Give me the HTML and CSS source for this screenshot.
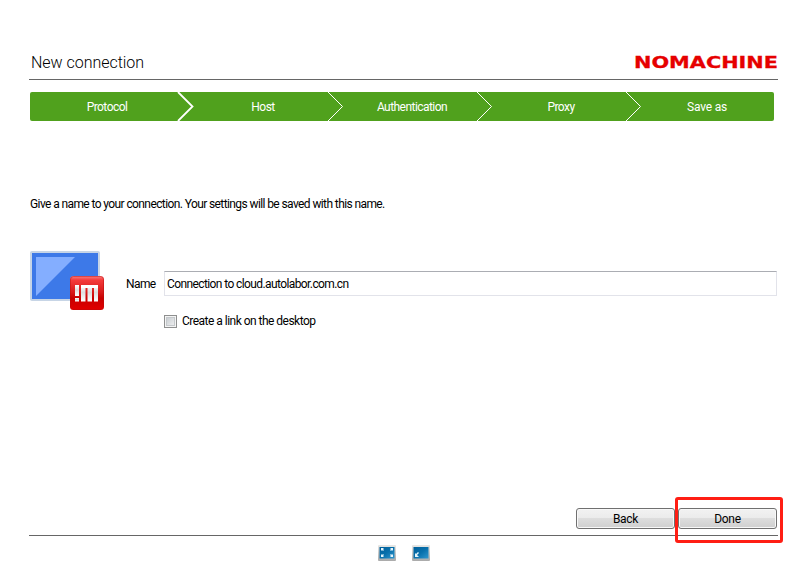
FILE: index.html
```
<!DOCTYPE html>
<html lang="en">
<head>
<meta charset="utf-8">
<title>New connection</title>
<link rel="stylesheet" href="styles.css">
</head>
<body>
<main class="window">
  <header class="header">
    <h1>New connection</h1>
    <svg class="brand" width="144" height="16" viewBox="0 0 144 16" role="img" aria-label="NoMachine"><text x="0" y="12" textLength="144" lengthAdjust="spacingAndGlyphs">NOMACHINE</text></svg>
  </header>
  <ol class="steps">
    <li class="strong"><span>Protocol</span><svg class="chevron" viewBox="0 0 17 29"><path d="M1 0 15.5 14.5 1 29"/></svg></li>
    <li><span>Host</span><svg class="chevron" viewBox="0 0 17 29"><path d="M1 0 15.5 14.5 1 29"/></svg></li>
    <li><span>Authentication</span><svg class="chevron" viewBox="0 0 17 29"><path d="M1 0 15.5 14.5 1 29"/></svg></li>
    <li><span>Proxy</span><svg class="chevron" viewBox="0 0 17 29"><path d="M1 0 15.5 14.5 1 29"/></svg></li>
    <li><span>Save as</span></li>
  </ol>
  <p class="intro">Give a name to your connection. Your settings will be saved with this name.</p>
  <section class="form">
    <svg class="session-icon" width="75" height="60" viewBox="0 0 75 60">
      <defs>
        <linearGradient id="badge" x2="0" y2="1"><stop offset="0" stop-color="#f98080"/><stop offset=".12" stop-color="#f43b3b"/><stop offset=".48" stop-color="#d71919"/><stop offset=".65" stop-color="#c80000"/><stop offset="1" stop-color="#e20000"/></linearGradient>
        <linearGradient id="mark" x2="0" y2="1"><stop offset="0" stop-color="#fff"/><stop offset=".45" stop-color="#ddd"/><stop offset="1" stop-color="#fff"/></linearGradient>
      </defs>
      <rect width="70" height="50" rx="2" fill="#c7d5e6"/>
      <rect x="2" y="2" width="66" height="46" fill="#3d79e8"/>
      <path d="M6 6H45L6 45Z" fill="#84aeff"/>
      <rect x="40" y="25" width="34" height="34" rx="3.5" fill="url(#badge)"/>
      <rect x="40.5" y="25.5" width="33" height="33" rx="3" fill="none" stroke="#b90b0b" stroke-opacity=".45"/>
      <g fill="url(#mark)"><rect x="45" y="34" width="4" height="11"/><rect x="45" y="47" width="4" height="3.5"/><rect x="51" y="34" width="4.5" height="16.5"/><rect x="57.5" y="34" width="4.5" height="16.5"/><rect x="64" y="34" width="4" height="16.5"/></g>
      <rect x="51" y="34" width="17" height="3" fill="#fff"/>
    </svg>
    <div class="fields">
      <label for="name">Name</label>
      <input id="name" type="text" value="Connection to cloud.autolabor.com.cn">
      <label class="check"><input type="checkbox"><span>Create a link on the desktop</span></label>
    </div>
  </section>
  <footer class="footer">
    <div class="actions">
      <button>Back</button>
      <div class="highlighted"><button>Done</button></div>
    </div>
    <div class="tools">
      <svg width="20" height="18" viewBox="0 0 20 18">
        <defs><linearGradient id="screen" x2="1" y2="1"><stop stop-color="#005f9a"/><stop offset=".5" stop-color="#0870ac"/><stop offset="1" stop-color="#3197ce"/></linearGradient><linearGradient id="frame" x2="0" y2="1"><stop stop-color="#e8e8e6"/><stop offset="1" stop-color="#aaa"/></linearGradient></defs>
        <rect x="1" y="1" width="18" height="16" rx="1" fill="url(#frame)"/><rect x="2.5" y="3" width="15" height="11.5" fill="url(#screen)"/>
        <path d="M4 4h3L6 5l1 1-1 1-1-1-1 1zM16 4h-3l1 1-1 1 1 1 1-1 1 1zM4 13h3l-1-1 1-1-1-1-1 1-1-1zM16 13h-3l1-1-1-1 1-1 1 1 1-1z" fill="#e3f4fb"/>
      </svg>
      <svg width="20" height="18" viewBox="0 0 20 18">
        <rect x="1" y="1" width="18" height="16" rx="1" fill="url(#frame)"/><rect x="2.5" y="3" width="15" height="11.5" fill="url(#screen)"/>
        <path d="M4 13V9l1 1 2-2 1 1-2 2 1 1 1 1z" fill="#e3f4fb"/>
      </svg>
    </div>
  </footer>
</main>
</body>
</html>
```
FILE: styles.css
```
* { box-sizing: border-box; }
body { margin: 0; background: #fff; color: #000; font: 12px/16px Roboto, "Liberation Sans", sans-serif; letter-spacing: -.6px; }
.window { height: 570px; padding: 48px 27px 0 29px; display: flex; flex-direction: column; overflow: hidden; }
.header { height: 32px; border-bottom: 1px solid #666; display: flex; align-items: center; justify-content: space-between; }
h1 { margin: 0 0 1px 2px; font-size: 16px; line-height: 20px; font-weight: 300; letter-spacing: -.03px; }
.brand { overflow: visible; }
.brand text { font: bold 16px "DejaVu Sans", sans-serif; fill: #e60000; stroke: #e60000; stroke-width: .3px; letter-spacing: 0; }
.steps { list-style: none; margin: 12px 0 0 1px; padding: 0; width: 744px; height: 29px; flex: none; display: grid; grid-template-columns: 149px 149px 149px 149px 1fr; background: #50a11d; border-radius: 2px; color: #fff; letter-spacing: -.55px; }
.steps li { position: relative; display: flex; align-items: center; justify-content: center; padding-left: 19px; }
.steps li:first-child { padding-left: 5px; }
.steps li:last-child { padding-left: 14px; letter-spacing: -.2px; }
.chevron { position: absolute; right: -15.5px; top: 0; width: 17px; height: 29px; fill: none; stroke: #fff; stroke-width: 1; z-index: 1; }
.strong .chevron { right: -15px; stroke-width: 1.8; }
.intro { margin: 75px 0 0 1px; }
.form { margin-top: 39px; display: flex; align-items: flex-start; padding-left: 1px; }
.session-icon { flex: none; }
.fields { flex: 1; margin: 20px 1px 0 21px; display: grid; grid-template-columns: 38px 1fr; align-items: center; row-gap: 17px; }
.fields input[type=text] { width: 100%; height: 25px; padding: 0 2px; border: 1px solid #e2e3ea; border-top-color: #abadb3; font: inherit; letter-spacing: inherit; color: #000; outline: 0; }
.check { grid-column: 2; display: flex; align-items: center; gap: 5px; letter-spacing: -.52px; }
.check input { appearance: none; margin: 0; width: 13px; height: 13px; border: 1px solid #8e8f8f; background: linear-gradient(135deg, #bfc5ca, #f6f6f6); box-shadow: inset 0 0 0 1px #f4f4f4, inset 0 0 0 2px #c5c9cc; }
.footer { margin-top: auto; height: 73px; }
.actions { height: 39px; padding-top: 11px; border-bottom: 1px solid #666; display: flex; justify-content: flex-end; gap: 3px; padding-right: 1px; }
button { width: 99px; height: 21px; padding: 0; border: 1px solid #707070; border-radius: 3px; background: linear-gradient(#f2f2f2, #ebebeb 48%, #ddd 50%, #cfcfcf); box-shadow: inset 0 0 0 1px #f8f8f8; font: inherit; letter-spacing: -.3px; color: #000; }
.highlighted { position: relative; height: 21px; }
.highlighted::after { content: ""; position: absolute; inset: -11px -6px -14px -3px; border: 3px solid #ff1e14; border-radius: 3px; }
.tools { display: flex; justify-content: center; gap: 14px; padding: 8px 0 0 1px; }
.tools svg { display: block; }
```
